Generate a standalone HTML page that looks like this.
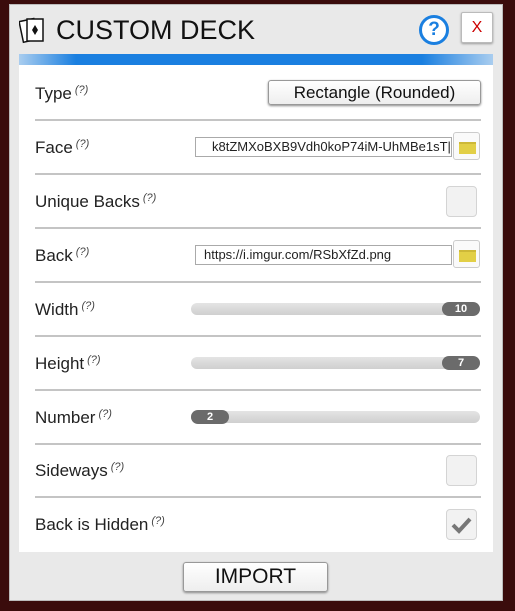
<!DOCTYPE html>
<html><head><meta charset="utf-8"><style>
*{margin:0;padding:0;box-sizing:border-box}
body{width:515px;height:611px;background:#3a0c0c;font-family:"Liberation Sans",sans-serif;position:relative;overflow:hidden}
.panel{position:absolute;left:9px;top:4px;width:494px;height:597px;background:#e9e9e9;border:1px solid #bbb}
.title{position:absolute;left:56px;top:15px;font-size:27px;color:#111}
.bar{position:absolute;left:19px;top:54px;width:474px;height:11px;background:linear-gradient(90deg,#a9cdef 0,#1a7fe0 12%,#1a7fe0 85%,#a9cdef 100%)}
.inner{position:absolute;left:19px;top:65px;width:474px;height:487px;background:#fff}
.row{position:absolute;left:35px;width:446px;height:54px}
.row .lbl{position:absolute;left:0;top:18px;font-size:17px;color:#222}
.row .lbl sup{font-size:11px;font-style:italic;color:#444;vertical-align:6px;margin-left:3px}
.sep{position:absolute;left:35px;width:446px;height:2px;background:#c4c4c4}
.inp{position:absolute;left:160px;top:17px;width:257px;height:20px;border:1px solid #aaa;font-size:13px;line-height:18px;padding-left:8px;color:#222;background:#fff}
.fold{position:absolute;left:418px;top:12px;width:27px;height:28px;border:1px solid #ccc;border-radius:3px;background:#fafafa}
.fold:after{content:"";position:absolute;left:5px;top:9px;width:17px;height:10px;background:#e2cf46;border-top:2px solid #cdb838}
.chk{position:absolute;left:411px;top:12px;width:31px;height:31px;border:1px solid #d4d4d4;border-radius:4px;background:#f2f2f2}
.trk{position:absolute;left:156px;top:21px;width:289px;height:12px;border-radius:6px;background:linear-gradient(#e4e4e4,#cfcfcf)}
.hdl{position:absolute;top:20px;width:38px;height:14px;border-radius:7px;background:#6b6b6b;color:#fff;font-size:11px;font-weight:bold;text-align:center;line-height:14px}
.btn{position:absolute;background:linear-gradient(#fff,#eee);border:1px solid #999;border-radius:3px;box-shadow:0 1px 2px #888;text-align:center;color:#111}
</style></head><body>
<div class="panel"></div>
<svg style="position:absolute;left:19px;top:16px" width="28" height="28" viewBox="0 0 28 28"><rect x="2" y="4" width="15" height="21" fill="#fff" stroke="#111" stroke-width="1.5" transform="rotate(-12 9 14)"/><rect x="8" y="3" width="16" height="22" fill="#fff" stroke="#111" stroke-width="1.5"/><path d="M16 9 L19 14 L16 19 L13 14Z" fill="#111"/></svg>
<div class="title">CUSTOM DECK</div>
<div style="position:absolute;left:419px;top:15px;width:30px;height:30px;border-radius:50%;border:3px solid #1a7fe0;background:#fff;color:#1a7fe0;font-weight:bold;font-size:19px;text-align:center;line-height:24px">?</div>
<div style="position:absolute;left:461px;top:12px;width:32px;height:31px;background:#fff;border:1px solid #bbb;border-radius:2px;box-shadow:0 1px 2px #999;color:#c00;font-size:16px;text-align:center;line-height:29px">X</div>
<div class="bar"></div>
<div class="inner"></div>

<div class="row" style="top:66px"><div class="lbl">Type<sup>(?)</sup></div>
<div class="btn" style="left:233px;top:14px;width:213px;height:25px;font-size:17px;line-height:23px">Rectangle (Rounded)</div></div>
<div class="sep" style="top:119px"></div>
<div class="row" style="top:120px"><div class="lbl">Face<sup>(?)</sup></div><div class="inp" style="padding-left:16px">k8tZMXoBXB9Vdh0koP74iM-UhMBe1sT|</div><div class="fold"></div></div>
<div class="sep" style="top:173px"></div>
<div class="row" style="top:174px"><div class="lbl">Unique Backs<sup>(?)</sup></div><div class="chk"></div></div>
<div class="sep" style="top:227px"></div>
<div class="row" style="top:228px"><div class="lbl">Back<sup>(?)</sup></div><div class="inp">https://i.imgur.com/RSbXfZd.png</div><div class="fold"></div></div>
<div class="sep" style="top:281px"></div>
<div class="row" style="top:282px"><div class="lbl">Width<sup>(?)</sup></div><div class="trk"></div><div class="hdl" style="left:407px">10</div></div>
<div class="sep" style="top:335px"></div>
<div class="row" style="top:336px"><div class="lbl">Height<sup>(?)</sup></div><div class="trk"></div><div class="hdl" style="left:407px">7</div></div>
<div class="sep" style="top:389px"></div>
<div class="row" style="top:390px"><div class="lbl">Number<sup>(?)</sup></div><div class="trk"></div><div class="hdl" style="left:156px">2</div></div>
<div class="sep" style="top:443px"></div>
<div class="row" style="top:443px"><div class="lbl">Sideways<sup>(?)</sup></div><div class="chk"></div></div>
<div class="sep" style="top:496px"></div>
<div class="row" style="top:497px"><div class="lbl">Back is Hidden<sup>(?)</sup></div><div class="chk"><svg width="29" height="29" viewBox="0 0 29 29"><path d="M6 15 L12 21 L23 9" fill="none" stroke="#777" stroke-width="4"/></svg></div></div>

<div class="btn" style="left:183px;top:562px;width:145px;height:30px;font-size:21px;line-height:28px">IMPORT</div>
</body></html>
